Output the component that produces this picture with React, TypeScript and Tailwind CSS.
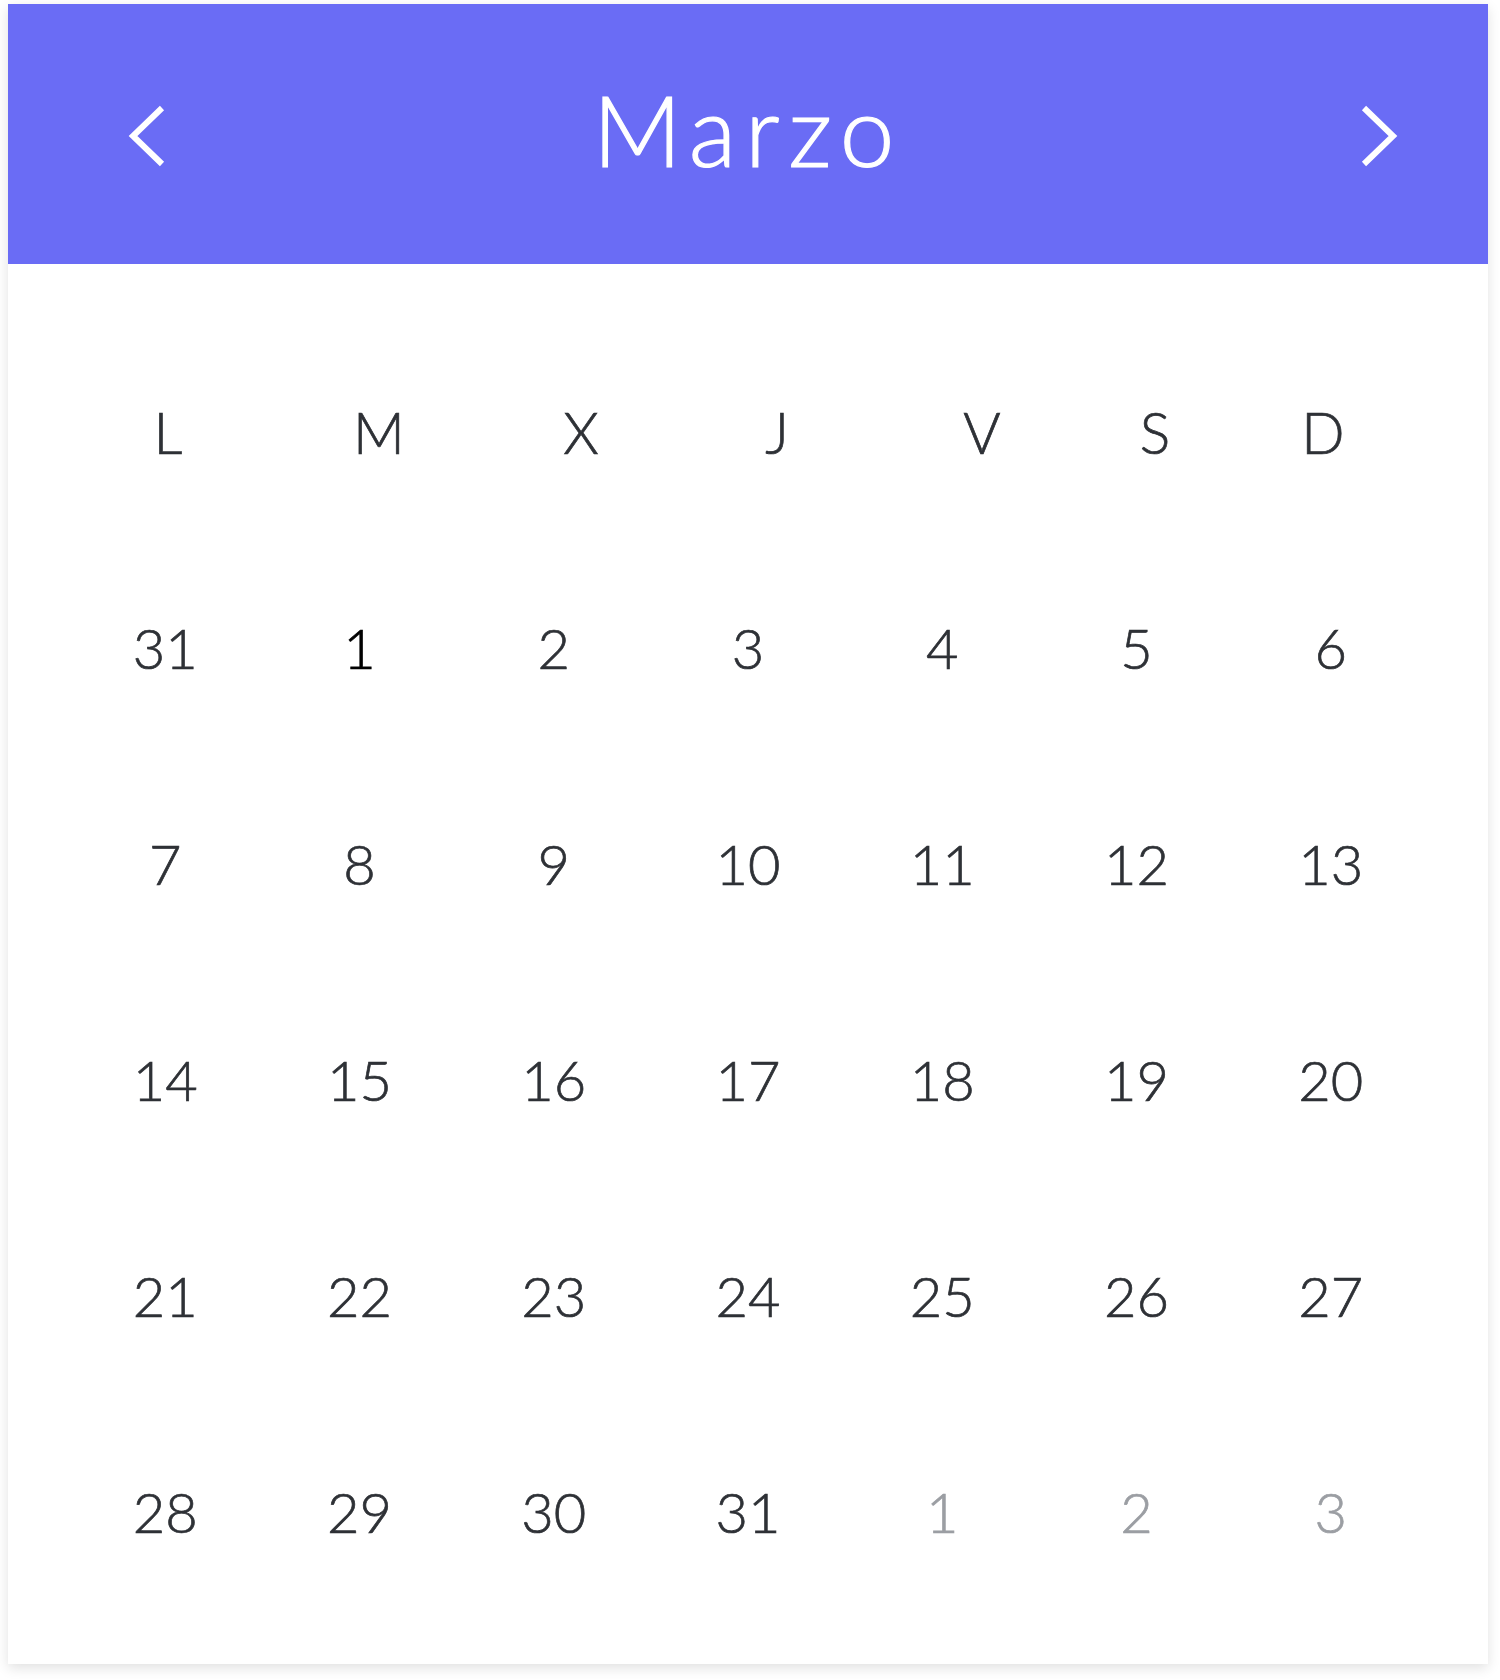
import React from 'react'

const dayNames = ['L', 'M', 'X', 'J', 'V', 'S', 'D']

type Day = { n: number; muted?: boolean; strong?: boolean }

const weeks: Day[][] = [
  [{ n: 31 }, { n: 1, strong: true }, { n: 2 }, { n: 3 }, { n: 4 }, { n: 5 }, { n: 6 }],
  [{ n: 7 }, { n: 8 }, { n: 9 }, { n: 10 }, { n: 11 }, { n: 12 }, { n: 13 }],
  [{ n: 14 }, { n: 15 }, { n: 16 }, { n: 17 }, { n: 18 }, { n: 19 }, { n: 20 }],
  [{ n: 21 }, { n: 22 }, { n: 23 }, { n: 24 }, { n: 25 }, { n: 26 }, { n: 27 }],
  [
    { n: 28 },
    { n: 29 },
    { n: 30 },
    { n: 31 },
    { n: 1, muted: true },
    { n: 2, muted: true },
    { n: 3, muted: true },
  ],
]

function Chevron({ dir }: { dir: 'left' | 'right' }) {
  const points = dir === 'left' ? '34,5 5,33 34,61' : '6,5 35,33 6,61'
  return (
    <svg width="40" height="66" viewBox="0 0 40 66" fill="none" className="block">
      <polyline points={points} stroke="#ffffff" strokeWidth="6" strokeLinejoin="miter" />
    </svg>
  )
}

export default function App() {
  return (
    <div className="min-h-screen bg-white font-['Lato','Open_Sans',sans-serif]">
      <div className="ml-[8px] mt-[4px] w-[1480px] h-[1660px] bg-white shadow-[0_4px_12px_rgba(0,0,0,0.12)] flex flex-col">
        {/* month header */}
        <div className="h-[260px] bg-[#6a6cf5] grid grid-cols-[1fr_auto_1fr] items-center">
          <button className="justify-self-start ml-[120px] mt-[4px]">
            <Chevron dir="left" />
          </button>
          <h1 className="text-white text-[98px] font-light leading-none tracking-[0.09em] pb-[10px] [-webkit-text-stroke-width:1.2px]">
            Marzo
          </h1>
          <button className="justify-self-end mr-[90px] mt-[4px]">
            <Chevron dir="right" />
          </button>
        </div>

        {/* grid */}
        <div className="flex-1 pt-[60px] pb-[44px] pl-[60px] pr-[60px] text-[#2e3136]">
          <div className="grid grid-cols-[200px_222px_182px_210px_200px_146px_190px] h-[216px] items-center">
            {dayNames.map((d) => (
              <div
                key={d}
                className="text-center text-[57px] font-light leading-none [-webkit-text-stroke-width:0.7px]"
              >
                {d}
              </div>
            ))}
          </div>
          {weeks.map((week, i) => (
            <div key={i} className="grid grid-cols-7 h-[216px] items-center">
              {week.map((day, j) => (
                <div
                  key={j}
                  className={
                    'text-center text-[56px] font-light leading-none [-webkit-text-stroke-width:0.7px] ' +
                    (day.muted ? 'text-[#9b9ea3]' : day.strong ? 'text-black' : '')
                  }
                >
                  {day.n}
                </div>
              ))}
            </div>
          ))}
        </div>
      </div>
    </div>
  )
}
